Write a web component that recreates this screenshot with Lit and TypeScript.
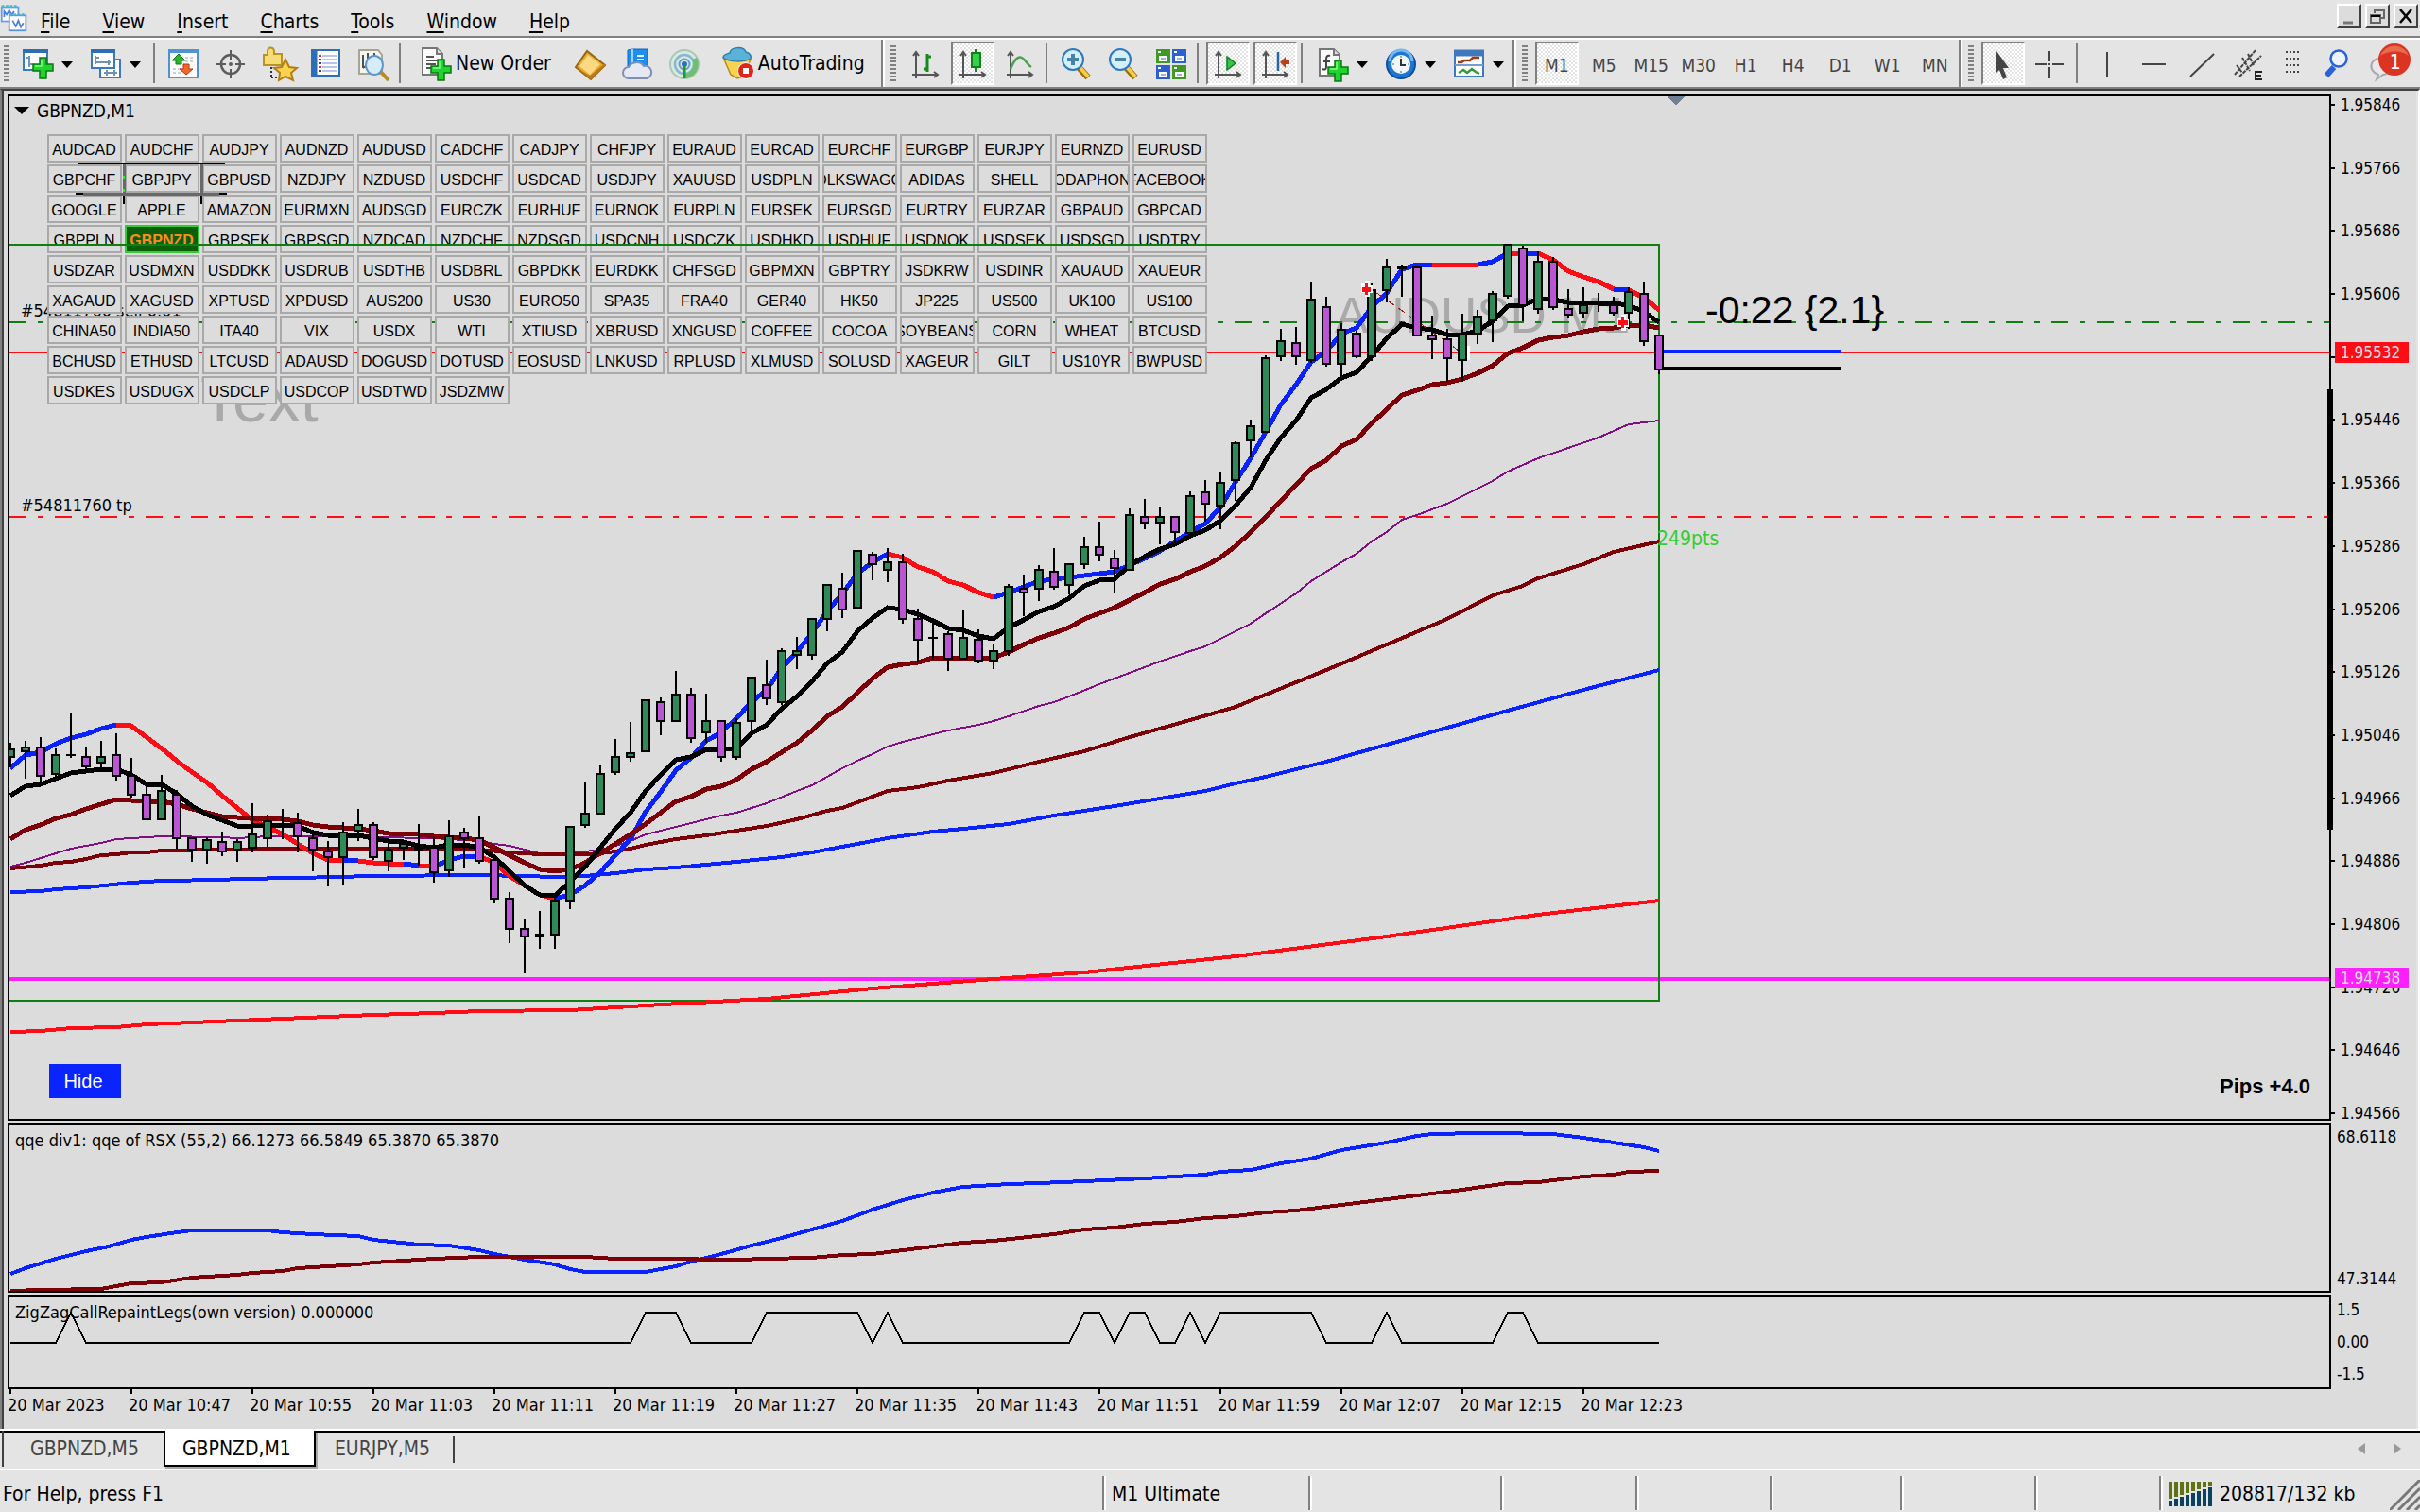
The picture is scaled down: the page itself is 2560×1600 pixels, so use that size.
import { LitElement, html, css, svg, nothing } from "lit";
import { customElement, property, state } from "lit/decorators.js";
import { classMap } from "lit/directives/class-map.js";

/* ---------- data ---------- */

const MENUS = ["File", "View", "Insert", "Charts", "Tools", "Window", "Help"];
const TIMEFRAMES = ["M1", "M5", "M15", "M30", "H1", "H4", "D1", "W1", "MN"];

const SYMBOLS = `
AUDCAD AUDCHF AUDJPY AUDNZD AUDUSD CADCHF CADJPY CHFJPY EURAUD EURCAD EURCHF EURGBP EURJPY EURNZD EURUSD
GBPCHF GBPJPY GBPUSD NZDJPY NZDUSD USDCHF USDCAD USDJPY XAUUSD USDPLN VOLKSWAGON ADIDAS SHELL VODAPHONE FACEBOOK
GOOGLE APPLE AMAZON EURMXN AUDSGD EURCZK EURHUF EURNOK EURPLN EURSEK EURSGD EURTRY EURZAR GBPAUD GBPCAD
GBPPLN GBPNZD GBPSEK GBPSGD NZDCAD NZDCHF NZDSGD USDCNH USDCZK USDHKD USDHUF USDNOK USDSEK USDSGD USDTRY
USDZAR USDMXN USDDKK USDRUB USDTHB USDBRL GBPDKK EURDKK CHFSGD GBPMXN GBPTRY JSDKRW USDINR XAUAUD XAUEUR
XAGAUD XAGUSD XPTUSD XPDUSD AUS200 US30 EURO50 SPA35 FRA40 GER40 HK50 JP225 US500 UK100 US100
CHINA50 INDIA50 ITA40 VIX USDX WTI XTIUSD XBRUSD XNGUSD COFFEE COCOA SOYBEANS CORN WHEAT BTCUSD
BCHUSD ETHUSD LTCUSD ADAUSD DOGUSD DOTUSD EOSUSD LNKUSD RPLUSD XLMUSD SOLUSD XAGEUR GILT US10YR BWPUSD
USDKES USDUGX USDCLP USDCOP USDTWD JSDZMW`.trim().split(/\s+/);

const PRICES = [
  "1.95846", "1.95766", "1.95686", "1.95606", "1.95526", "1.95446", "1.95366", "1.95286", "1.95206",
  "1.95126", "1.95046", "1.94966", "1.94886", "1.94806", "1.94726", "1.94646", "1.94566",
];
const TIMES = [
  "20 Mar 2023", "20 Mar 10:47", "20 Mar 10:55", "20 Mar 11:03", "20 Mar 11:11", "20 Mar 11:19", "20 Mar 11:27",
  "20 Mar 11:35", "20 Mar 11:43", "20 Mar 11:51", "20 Mar 11:59", "20 Mar 12:07", "20 Mar 12:15", "20 Mar 12:23",
];

/* One bar each: high, body top, body bottom, low, kind (u = up, d = down, x = doji). */
type Bar = [number, number, number, number, "u" | "d" | "x"];
const BARS: Bar[] = [
  [786, 792, 802, 812, "u"], [784, 790, 796, 824, "u"], [780, 790, 822, 828, "d"], [792, 798, 820, 824, "u"],
  [754, 798, 800, 802, "x"], [790, 800, 812, 815, "d"], [784, 800, 808, 813, "u"], [776, 798, 822, 826, "d"],
  [802, 820, 842, 844, "d"], [832, 840, 868, 868, "d"], [820, 836, 868, 868, "u"], [836, 840, 888, 898, "d"],
  [886, 886, 900, 912, "d"], [886, 888, 900, 914, "u"], [880, 890, 902, 906, "d"], [888, 890, 900, 912, "u"],
  [850, 882, 898, 902, "u"], [862, 868, 888, 896, "u"], [856, 871, 873, 888, "x"], [860, 870, 886, 902, "d"],
  [880, 886, 900, 922, "d"], [890, 900, 908, 938, "d"], [870, 880, 908, 936, "u"], [856, 872, 880, 890, "u"],
  [870, 872, 908, 910, "d"], [888, 898, 912, 922, "u"], [890, 892, 898, 910, "u"], [872, 896, 900, 916, "x"],
  [886, 896, 924, 934, "d"], [868, 884, 922, 928, "u"], [876, 880, 888, 918, "d"], [864, 886, 912, 914, "d"],
  [908, 909, 952, 956, "d"], [944, 950, 984, 998, "d"], [972, 982, 992, 1030, "d"], [964, 988, 992, 1004, "x"],
  [950, 952, 990, 1004, "u"], [874, 874, 954, 962, "u"], [828, 860, 874, 876, "u"], [810, 818, 862, 862, "u"],
  [782, 800, 818, 820, "u"], [764, 796, 802, 806, "u"], [740, 740, 796, 796, "u"], [738, 742, 764, 778, "d"],
  [710, 734, 764, 764, "u"], [728, 734, 782, 786, "d"], [734, 762, 776, 786, "u"], [762, 762, 802, 806, "d"],
  [760, 764, 802, 804, "u"], [716, 716, 764, 777, "u"], [698, 724, 740, 746, "d"], [686, 688, 744, 746, "u"],
  [674, 688, 694, 708, "u"], [654, 654, 694, 698, "u"], [618, 618, 656, 668, "u"], [606, 622, 646, 654, "d"],
  [582, 582, 644, 644, "u"], [584, 586, 598, 614, "d"], [580, 594, 604, 616, "u"], [586, 594, 656, 660, "d"],
  [644, 654, 678, 700, "d"], [658, 674, 676, 698, "x"], [668, 670, 698, 710, "d"], [646, 674, 698, 698, "u"],
  [666, 676, 700, 702, "d"], [682, 688, 700, 708, "u"], [618, 620, 690, 694, "u"], [608, 622, 628, 652, "d"],
  [598, 602, 624, 636, "u"], [580, 604, 622, 624, "d"], [596, 596, 620, 629, "u"], [568, 578, 598, 602, "u"],
  [552, 578, 588, 594, "d"], [582, 590, 602, 628, "d"], [538, 544, 604, 604, "u"], [528, 546, 554, 560, "d"],
  [536, 546, 554, 576, "u"], [546, 546, 564, 573, "d"], [520, 524, 565, 565, "u"], [508, 520, 534, 552, "d"],
  [500, 510, 536, 560, "u"], [467, 468, 509, 530, "u"], [444, 450, 467, 484, "u"], [376, 378, 458, 458, "u"],
  [348, 360, 378, 382, "u"], [346, 362, 378, 386, "d"], [298, 316, 382, 384, "u"], [314, 324, 386, 388, "d"],
  [342, 348, 386, 398, "u"], [350, 352, 378, 379, "d"], [300, 306, 378, 382, "u"], [274, 282, 308, 320, "u"],
  [280, 282, 285, 314, "x"], [282, 282, 356, 356, "d"], [334, 354, 360, 380, "d"], [348, 358, 380, 404, "d"],
  [332, 353, 382, 404, "u"], [328, 334, 354, 364, "u"], [308, 310, 340, 362, "u"], [258, 258, 314, 316, "u"],
  [260, 262, 324, 340, "d"], [266, 276, 328, 332, "u"], [272, 276, 326, 328, "d"], [306, 326, 334, 337, "d"],
  [304, 322, 332, 336, "u"], [310, 319, 321, 330, "x"], [314, 322, 332, 334, "d"], [304, 308, 332, 348, "u"],
  [298, 310, 362, 366, "d"], [354, 354, 392, 396, "d"],
];

/* Averages that hold one value for each bar. */
const BLACK_MA = [
  842, 832, 830, 824, 818, 816, 814, 814, 820, 830, 830, 840, 853, 862, 868, 874, 874, 873, 873, 874,
  881, 884, 884, 884, 887, 890, 891, 895, 897, 894, 894, 897, 907, 922, 937, 947, 948, 933, 917, 897,
  877, 860, 837, 820, 804, 801, 793, 793, 792, 776, 767, 750, 737, 721, 702, 690, 668, 654, 643, 645,
  650, 657, 665, 667, 673, 676, 664, 656, 647, 642, 633, 620, 614, 613, 598, 589, 581, 576, 567, 561,
  551, 535, 516, 487, 463, 445, 421, 412, 400, 394, 377, 358, 343, 347, 349, 354, 354, 350, 340, 324,
  323, 316, 317, 320, 320, 321, 321, 323, 330, 341,
];
const FAST_MA = [
  813, 799, 796, 787, 781, 777, 771, 767, 768, 780, 792, 805, 817, 828, 842, 855, 868, 875, 883, 893,
  903, 910, 910, 911, 913, 914, 914, 916, 917, 910, 906, 906, 913, 927, 937, 947, 951, 947, 937, 923,
  905, 888, 859, 838, 815, 802, 784, 775, 760, 743, 730, 707, 690, 670, 647, 628, 607, 595, 586, 590,
  600, 605, 615, 619, 627, 632, 627, 621, 615, 613, 611, 609, 607, 605, 598, 591, 583, 573, 563, 554,
  537, 510, 485, 457, 428, 407, 383, 372, 353, 347, 325, 310, 285, 280, 280, 280, 280, 280, 277, 268,
  268, 268, 275, 287, 293, 298, 306, 307, 315, 328,
];
/* Stretches of the fast average that are falling; the rest is rising. */
const FALLING: [number, number][] = [
  [7, 22], [23, 26], [27, 28], [31, 36], [58, 65], [94, 97], [99, 100], [101, 106], [107, 109],
];
const MAROON_MA = [
  888, 878, 873, 866, 862, 856, 851, 846, 847, 848, 848, 851, 856, 860, 864, 865, 866, 866, 867, 869,
  873, 875, 876, 877, 879, 882, 882, 883, 885, 886, 887, 889, 897, 905, 913, 920, 922, 920, 913, 903,
  893, 883, 872, 860, 848, 843, 835, 832, 825, 814, 806, 796, 786, 773, 758, 748, 733, 718, 706, 703,
  701, 696, 696, 696, 696, 696, 690, 682, 675, 670, 664, 655, 649, 643, 635, 627, 618, 613, 605, 599,
  590, 578, 563, 547, 530, 513, 496, 487, 472, 465, 448, 433, 418, 413, 407, 405, 401, 395, 387, 374,
  368, 360, 357, 355, 351, 348, 347, 344, 344, 347,
];

/* Slow lines: flat lists of bar, y. */
const PURPLE_MA = [
  0, 917, 1, 913, 2, 908, 3, 903, 4, 898, 5, 895, 6, 892, 7, 888, 8, 887, 10, 885, 14, 886, 15, 887, 17, 885,
  20, 885, 24, 886, 28, 887, 30, 889, 31, 890, 32, 893, 33, 895, 34, 899, 35, 903, 37, 903, 38, 901, 39, 899,
  40, 895, 41, 890, 42, 883, 43, 879, 44, 875, 46, 867, 47, 863, 48, 860, 50, 850, 52, 837, 53, 831, 54, 822,
  55, 813, 56, 805, 57, 798, 58, 790, 59, 785, 60, 781, 61, 777, 62, 773, 64, 767, 65, 763, 66, 758, 68, 747,
  69, 743, 70, 737, 72, 724, 74, 712, 76, 700, 78, 689, 79, 684, 80, 676, 81, 668, 82, 660, 83, 649, 85, 628,
  86, 615, 88, 595, 89, 586, 90, 573, 91, 563, 92, 550, 93, 545, 95, 533, 96, 525, 98, 509, 99, 499, 101, 485,
  103, 474, 105, 463, 107, 449, 108, 447, 109, 445,
];
const MAROON_SLOW = [
  0, 919, 2, 916, 3, 913, 4, 912, 5, 909, 6, 905, 7, 904, 8, 902, 9, 902, 10, 900, 14, 899, 18, 898, 30, 898,
  31, 899, 33, 902, 35, 904, 38, 904, 39, 903, 40, 901, 41, 898, 42, 894, 44, 888, 46, 884, 48, 879, 50, 874,
  52, 867, 54, 858, 55, 855, 57, 843, 58, 837, 60, 833, 62, 826, 65, 818, 68, 806, 71, 795, 74, 780, 78, 762,
  81, 748, 83, 735, 87, 709, 91, 682, 95, 655, 98, 630, 100, 620, 101, 612, 103, 602, 104, 597, 106, 584, 109, 573,
];
const BLUE_SLOW = [
  0, 944, 2, 943, 3, 941, 5, 939, 8, 934, 10, 932, 14, 931, 15, 930, 19, 929, 24, 927, 31, 926, 34, 927, 36, 928,
  38, 927, 40, 924, 42, 920, 44, 918, 46, 915, 48, 912, 51, 907, 53, 902, 55, 896, 58, 887, 61, 880, 63, 877,
  66, 872, 69, 863, 73, 853, 76, 845, 79, 837, 81, 829, 83, 822, 87, 806, 91, 788, 95, 770, 99, 752, 104, 730, 109, 709,
];
const RED_SLOW = [
  0, 1092, 2, 1091, 4, 1088, 7, 1087, 9, 1084, 12, 1082, 15, 1080, 18, 1078, 21, 1076, 24, 1074, 28, 1072,
  31, 1070, 37, 1069, 39, 1067, 42, 1064, 50, 1057, 57, 1046, 65, 1036, 71, 1029, 81, 1012, 91, 991, 101, 968, 109, 953,
];
const RSX_FAST = [
  0, 1348, 1, 1342, 3, 1332, 5, 1324, 6.5, 1319, 8, 1312, 9, 1309, 11, 1304, 12, 1302, 17, 1302, 18, 1304, 20, 1306,
  23, 1308, 24, 1312, 27, 1317, 29, 1318, 31, 1323, 32, 1327, 34, 1333, 36, 1338, 37, 1343, 38, 1346, 42, 1346,
  43, 1343, 44, 1340, 45, 1335, 47, 1327, 49, 1318, 51, 1310, 53, 1301, 55, 1292, 57, 1280, 59, 1270, 61, 1262,
  63, 1256, 66, 1253, 68, 1252, 71, 1250, 75, 1247, 79, 1243, 80, 1240, 82, 1238, 84, 1231, 86, 1226, 88, 1217,
  91, 1209, 93, 1202, 94, 1200, 97, 1199, 98, 1199, 102, 1200, 104, 1204, 106, 1209, 108, 1214, 109, 1218,
];
const RSX_SLOW = [
  0, 1366, 2, 1365, 6, 1364, 7, 1361, 8, 1358, 10, 1357, 12, 1352, 15, 1349, 16, 1347, 18, 1345, 19, 1342, 21, 1340,
  23, 1338, 24, 1336, 26, 1334, 28, 1332, 31, 1330, 38, 1330, 40, 1332, 45, 1332, 46, 1333, 48, 1333, 50, 1332,
  53, 1331, 55, 1328, 57, 1327, 60, 1321, 63, 1315, 65, 1313, 69, 1306, 71, 1301, 73, 1299, 75, 1295, 77, 1293,
  79, 1289, 81, 1287, 83, 1283, 85, 1281, 88, 1275, 92, 1267, 96, 1259, 99, 1252, 101, 1251, 104, 1245, 106, 1243,
  107, 1240, 109, 1239,
];
/* Bars on which the zigzag sits at its upper level. */
const ZIGZAG_HIGH: [number, number][] = [
  [4, 4], [42, 44], [50, 56], [58, 58], [71, 72], [74, 75], [78, 78], [80, 86], [91, 91], [99, 100],
];

const barX = (bar: number) => 11 + 16 * bar;
const fromBars = (ys: number[], start = 0, end = ys.length - 1) =>
  ys.slice(start, end + 1).map((y, i) => `${barX(start + i)},${y}`).join(" ");
const fromPairs = (flat: number[]) => {
  const out: string[] = [];
  for (let i = 0; i < flat.length; i += 2) out.push(`${barX(flat[i])},${flat[i + 1]}`);
  return out.join(" ");
};
const zigzagPoints = () =>
  BARS.map((_, i) => `${barX(i)},${ZIGZAG_HIGH.some(([a, b]) => i >= a && i <= b) ? 1389 : 1421}`).join(" ");

/* ---------- icons ---------- */

const plus = (x: number, y: number) => svg`
  <path d="M${x + 7} ${y}h7v7h7v7h-7v8h-7v-8h-7v-7h7z" fill="#1fd42c" stroke="#067a10" stroke-width="1.5"/>
  <path d="M${x + 9} ${y + 2}v7h-7" fill="none" stroke="#8df58e" stroke-width="1.5"/>`;
const axes = svg`<path d="M7 5v27M3 28h27M4 8l3-4 3 4M26 25l4 3-4 3" fill="none" stroke="#555" stroke-width="2"/>`;
const page = svg`<path d="M3 1h15l6 6v22H3z" fill="#fafafa" stroke="#777" stroke-width="2"/><path d="M18 1v6h6" fill="#ddd" stroke="#777" stroke-width="2"/>`;
const lens = (sign: string) => svg`
  <path d="M19 20l10 11" stroke="#9a6a10" stroke-width="7"/><path d="M20 20l9 10" stroke="#f2cf45" stroke-width="4"/>
  <ellipse cx="13" cy="12" rx="11" ry="11" fill="#d3effc" stroke="#2e78bb" stroke-width="2"/>
  <path d="${sign}" stroke="#4683a6" stroke-width="4"/>`;

const ICONS: Record<string, unknown> = {
  app: svg`
    <rect x="2" y="4" width="20" height="17" fill="#fff" stroke="#6b9be8" stroke-width="2"/>
    <path d="M2 3h20" stroke="#45b9c9" stroke-width="3" stroke-dasharray="3 2"/>
    <path d="M5 16V9l3 4 3-5 3 5 3-4" fill="none" stroke="#4a7fe0" stroke-width="2"/>
    <rect x="11" y="14" width="20" height="18" fill="#fff" stroke="#5b91ea" stroke-width="2"/>
    <path d="M11 13h20" stroke="#45b9c9" stroke-width="3" stroke-dasharray="3 2"/>
    <path d="M15 20l4 7 3-7 3 8 3-5" fill="none" stroke="#4a7fe0" stroke-width="2"/>`,
  newChart: svg`
    <rect x="2" y="2" width="25" height="21" fill="#fff" stroke="#3a7abf" stroke-width="2"/><path d="M1 3h27" stroke="#2f6db5" stroke-width="4"/>
    <path d="M8 8v12M5 10h3M8 17h4M14 19h6" stroke="#6e93b7" stroke-width="2"/>${plus(12, 10)}`,
  profiles: svg`
    <rect x="11" y="12" width="21" height="19" fill="#fff" stroke="#3a7abf" stroke-width="2"/><path d="M15 26h14M18 23v6M26 23v6" stroke="#6e93b7" stroke-width="2"/>
    <rect x="2" y="2" width="24" height="19" fill="#fff" stroke="#3a7abf" stroke-width="2"/><path d="M1 3h26" stroke="#2f6db5" stroke-width="4"/>
    <path d="M6 8v9M6 15h16M20 12v6M5 10h5" fill="none" stroke="#6e93b7" stroke-width="2"/>`,
  market: svg`
    <rect x="1" y="2" width="30" height="29" fill="#fdfdfd" stroke="#4f93d2" stroke-width="2"/><path d="M1 3h30" stroke="#4f93d2" stroke-width="4"/>
    <path d="M18 10h10M18 14h10M5 22h10M5 26h10" stroke="#cfcfcf" stroke-width="2" stroke-dasharray="3 2"/>
    <path d="M11 6l7 7h-4v4H8v-4H4z" fill="#2cb52c" stroke="#0c7a12"/><path d="M19 28l7-6h-4v-5h-6v5h-4z" fill="#f2662c" stroke="#b53410"/>`,
  target: svg`
    <circle cx="16" cy="17" r="10" fill="none" stroke="#5c5c5c" stroke-width="2.500"/><circle cx="16" cy="17" r="2" fill="#5c5c5c"/>
    <path d="M16 2v10M16 22v10M1 17h10M21 17h10" stroke="#5c5c5c" stroke-width="2"/>`,
  favorites: svg`
    <path d="M1 7h4V3a3 3 0 0 1 7 0v3h8v12H1z" fill="#f6dc77" stroke="#b99425" stroke-width="2"/>
    <path d="M9 20v12M9 31h6" fill="none" stroke="#333" stroke-width="2" stroke-dasharray="2 2"/>
    <path d="M24 12l4 8 8 1-6 5 2 8-8-4-7 4 1-8-6-5 8-1z" fill="#fbd34e" stroke="#b37d17" stroke-width="2"/>`,
  navigator: svg`
    <rect x="2" y="2" width="29" height="27" fill="#fff" stroke="#2d6fb3" stroke-width="2"/><path d="M5 2v27" stroke="#2d6fb3" stroke-width="5"/>
    <path d="M13 8h15M13 12h15M13 16h15M13 20h15M13 24h15" stroke="#b9c4ee" stroke-width="2"/><path d="M9 8h3M9 20h3" stroke="#e03030" stroke-width="2"/><path d="M9 12h3M9 16h3M9 24h3" stroke="#444" stroke-width="2"/>`,
  tester: svg`
    <path d="M2 2h20l4 5v20H2z" fill="#f4f4f0" stroke="#a8a492" stroke-width="2"/><path d="M6 7v14M11 5v6M18 5v5M6 21l6-4" stroke="#4f4f4f" stroke-width="2"/>
    <path d="M24 24l9 10" stroke="#c08a1a" stroke-width="4"/><ellipse cx="18" cy="18" rx="9" ry="10" fill="#d6ecfa" stroke="#5b97cc" stroke-width="2"/>`,
  newOrder: svg`${page}<path d="M7 10h8M7 14h12M7 18h10M7 22h5" stroke="#555" stroke-width="2"/>${plus(12, 13)}`,
  editor: svg`
    <path d="M1 20L13 3l19 15-15 15z" fill="#e6ac2e" stroke="#9a6312" stroke-width="2"/><path d="M5 19L14 7l13 10-11 11z" fill="#fbd982"/>
    <path d="M1 20l15 9 16-13v3L17 33z" fill="#b97b17"/>`,
  market2: svg`
    <path d="M6 2l5-1h16v18H6z" fill="#1d8df0" stroke="#0d66bf"/><path d="M11 1v18" stroke="#9fd4ff" stroke-width="2"/><path d="M16 8h7M16 12h7" stroke="#e8f6ff" stroke-width="2"/>
    <path d="M7 32a6 6 0 0 1 0-12 9 8 0 0 1 16-1 6 6 0 0 1 3 13z" fill="#e4e9f3" stroke="#7f90b4" stroke-width="2"/>`,
  signals: svg`
    <circle cx="16" cy="17" r="15" fill="#d5ebdb" stroke="#a8c8b4" stroke-width="2"/><circle cx="16" cy="17" r="10" fill="none" stroke="#8db4d4" stroke-width="2.500"/>
    <circle cx="16" cy="17" r="5.500" fill="none" stroke="#6b9bd0" stroke-width="2"/><path d="M16 32a15 15 0 0 0 13-22l-5 2a10 10 0 0 1-8 15z" fill="#6fbf73"/>
    <circle cx="16" cy="17" r="3" fill="#2f6fc0"/><path d="M16 18v14" stroke="#1e9a2c" stroke-width="3"/>`,
  auto: svg`
    <path d="M2 13h28l-8 18-6 2-7-4z" fill="#f8d34f" stroke="#bb8c1c" stroke-width="1.500"/><path d="M1 11c0-4 5-4 7-5 1-7 15-7 17-1 5 1 6 5 5 7-6 4-23 4-29-1z" fill="#59b2da" stroke="#2d7fa8" stroke-width="1.500"/>
    <circle cx="25" cy="25" r="8.500" fill="#e0261b" stroke="#fff"/><rect x="22" y="22" width="6" height="6" fill="#fff"/>`,
  bars: svg`${axes}<path d="M19 6v19M19 9h4M15 22h4" stroke="#168a1c" stroke-width="3"/>`,
  candles: svg`${axes}<path d="M20 1v24" stroke="#168a1c" stroke-width="2"/><rect x="16" y="5" width="9" height="15" fill="#34d24a" stroke="#12801b" stroke-width="2"/>`,
  line: svg`${axes}<path d="M7 22c4-10 8-14 12-12s5 7 10 10" fill="none" stroke="#4aa352" stroke-width="2.500"/>`,
  zoomIn: lens("M13 6v12M7 12h12"),
  zoomOut: lens("M7 12h12"),
  tile: svg`
    <rect x="1" y="1" width="15" height="15" fill="#3e9a22"/><rect x="18" y="1" width="15" height="15" fill="#2c5fd0"/><rect x="1" y="18" width="15" height="15" fill="#2c5fd0"/><rect x="18" y="18" width="15" height="15" fill="#3e9a22"/>
    <path d="M4 8h9v6H4zM21 8h9v6h-9zM4 25h9v6H4zM21 25h9v6h-9z" fill="#fff"/><path d="M6 11h5M23 11h5M6 28h5M23 28h5" stroke="#9bb6d8" stroke-width="2"/><path d="M3 4h3M20 4h3M3 21h3M20 21h3" stroke="#fff" stroke-width="2"/>`,
  scroll: svg`${axes}<path d="M16 9v14l9-7z" fill="#35c54a" stroke="#12801b" stroke-width="1.500"/>`,
  shift: svg`${axes}<path d="M20 4v20" stroke="#2766a8" stroke-width="2.500"/><path d="M22 15l6-6v4h4v4h-4v4z" fill="#b8401a"/>`,
  indicator: svg`${page}<path d="M14 8c-3-1-4 1-4 4v8c0 3-2 3-4 2M7 14h7" fill="none" stroke="#444" stroke-width="2"/>${plus(12, 13)}`,
  clock: svg`
    <circle cx="17" cy="17" r="15" fill="#1d77d0" stroke="#0d4f9c" stroke-width="2"/><path d="M5 14a12 12 0 0 1 24 0" fill="none" stroke="#73b9f3" stroke-width="3"/>
    <circle cx="17" cy="17" r="10" fill="#f1f6fa"/><path d="M17 11v7h5" fill="none" stroke="#333" stroke-width="2"/><path d="M17 8v2M17 24v2M8 17h2M24 17h2" stroke="#9ab" stroke-width="2"/>`,
  template: svg`
    <rect x="2" y="3" width="30" height="27" fill="#fff" stroke="#3f79bd" stroke-width="2"/><path d="M1 5h32" stroke="#3f79bd" stroke-width="7"/><path d="M2 18h30" stroke="#6ea0d4" stroke-width="2"/>
    <path d="M5 15h4l3-2h6l3-3h7" fill="none" stroke="#a23818" stroke-width="2.500"/><path d="M6 26l5-3 4 3 5-4 4 3 4 2" fill="none" stroke="#2f9a36" stroke-width="2.500"/>`,
  cursor: svg`<path d="M10 3l13 18h-6l4 10-4 2-4-10-4 4z" fill="#454545"/>`,
  cross: svg`<path d="M16 3v11M16 20v12M1 17h12M19 17h12" stroke="#454545" stroke-width="2"/><path d="M15 17h2" stroke="#454545" stroke-width="2"/>`,
  vline: svg`<path d="M17 4v26" stroke="#454545" stroke-width="2"/>`,
  hline: svg`<path d="M4 17h25" stroke="#454545" stroke-width="2"/>`,
  trend: svg`<path d="M5 30L30 6" stroke="#454545" stroke-width="2"/>`,
  channel: svg`
    <path d="M2 28L24 2M7 30L30 8M4 18l6 8M10 10l8 14M16 6l6 12" stroke="#454545" stroke-width="2" stroke-dasharray="4 1"/>
    <path d="M31 25h-7v8h7M24 29h6" fill="none" stroke="#222" stroke-width="2"/>`,
  dots: svg`<path d="M8 4h15M8 11h15M8 18h15M8 25h15" stroke="#454545" stroke-width="2" stroke-dasharray="2 2"/>`,
  search: svg`<path d="M5 29l8-9" stroke="#2a60d8" stroke-width="6"/><circle cx="18" cy="11" r="8.500" fill="#eef3fb" stroke="#2a60d8" stroke-width="2.500"/>`,
  bubble: svg`
    <path d="M10 33l2-5c-6-2-9-7-7-12 3-6 14-8 20-2 4 6 0 13-8 14z" fill="#e8e8ea" stroke="#a9a9ab" stroke-width="2"/>
    <circle cx="29" cy="12" r="17" fill="#dd3322"/><path d="M14 8a16 16 0 0 1 30 0c-6-6-22-6-30 0z" fill="#ea6a50"/>`,
};

@customElement("tb-icon")
class TbIcon extends LitElement {
  static styles = css`
    :host { display: inline-flex; flex: none; }
    svg { display: block; overflow: visible; }
  `;
  @property() name = "";
  @property({ type: Number }) size = 34;
  render() {
    return html`<svg width=${this.size} height=${this.size} viewBox="0 0 34 34" fill="none" aria-hidden="true">${ICONS[this.name]}</svg>`;
  }
}

/* ---------- toolbar ---------- */

@customElement("tool-bar")
class ToolBar extends LitElement {
  static styles = css`
    :host {
      display: flex;
      height: 50px;
      border-top: 2px solid #fff;
      border-bottom: 2px solid #808080;
      overflow: hidden;
    }
    .group {
      display: flex;
      align-items: center;
      gap: 4px;
      flex: none;
      padding: 0 2px 0 6px;
      border-left: 2px solid #fff;
      border-right: 2px solid #808080;
    }
    .group.first { border-left: 0; padding-left: 4px; }
    .group.last { border-right: 0; }
    .grip {
      width: 6px;
      height: 38px;
      margin-right: 4px;
      background: repeating-linear-gradient(#808080 0 2px, transparent 2px 4px);
    }
    .sep { width: 4px; height: 42px; border-left: 2px solid #808080; }
    button {
      display: flex;
      align-items: center;
      justify-content: center;
      box-sizing: border-box;
      height: 46px;
      width: 46px;
      flex: none;
      padding: 2px 0 0;
      border: 2px solid transparent;
      background: none;
      font: inherit;
      color: #000;
      white-space: nowrap;
    }
    button.pressed {
      border-color: #808080 #fff #fff #808080;
      background: repeating-conic-gradient(#fff 0 25%, #e4e4e4 0 50%) 0 0 / 4px 4px;
    }
    button.drop { width: 68px; gap: 8px; }
    button.drop::after {
      content: "";
      border: 6px solid transparent;
      border-top: 7px solid #000;
      border-bottom: 0;
    }
    button.first-drop { justify-content: flex-start; padding-left: 3px; }
    button.text { width: auto; gap: 4px; padding: 0 13px 0 10px; }
    button.frame { padding-top: 4px; font-size: 19px; color: #444; }
    button.narrow { width: 42px; }
    .alerts { position: relative; }
    .count { position: absolute; left: 28px; top: 6px; color: #fff; line-height: 28px; }
  `;
  @state() private timeframe = "M1";

  private tool(name: string, label: string, extra = "") {
    return html`<button class=${extra} aria-label=${label}><tb-icon name=${name}></tb-icon></button>`;
  }

  render() {
    return html`
      <div class="group first">
        <span class="grip"></span>
        ${this.tool("newChart", "New chart", "drop first-drop")} ${this.tool("profiles", "Profiles", "drop first-drop")}
        <span class="sep"></span>
        ${this.tool("market", "Market watch")} ${this.tool("target", "Data window")}
        ${this.tool("favorites", "Navigator")} ${this.tool("navigator", "Terminal")} ${this.tool("tester", "Strategy tester")}
        <span class="sep"></span>
        <button class="text"><tb-icon name="newOrder"></tb-icon>New Order</button>
        ${this.tool("editor", "Editor")} ${this.tool("market2", "Market")} ${this.tool("signals", "Signals")}
        <button class="text"><tb-icon name="auto"></tb-icon>AutoTrading</button>
      </div>
      <div class="group">
        <span class="grip"></span>
        ${this.tool("bars", "Bar chart")} ${this.tool("candles", "Candlesticks", "pressed")} ${this.tool("line", "Line chart")}
        <span class="sep"></span>
        ${this.tool("zoomIn", "Zoom in")} ${this.tool("zoomOut", "Zoom out")} ${this.tool("tile", "Tile windows")}
        <span class="sep"></span>
        ${this.tool("scroll", "Auto scroll", "pressed")} ${this.tool("shift", "Chart shift", "pressed")}
        <span class="sep"></span>
        ${this.tool("indicator", "Indicators", "drop")} ${this.tool("clock", "Periods", "drop")} ${this.tool("template", "Templates", "drop")}
      </div>
      <div class="group">
        <span class="grip"></span>
        ${TIMEFRAMES.map((t) => html`
          <button class=${classMap({ frame: true, pressed: t === this.timeframe })} @click=${() => (this.timeframe = t)}>${t}</button>`)}
      </div>
      <div class="group last">
        <span class="grip"></span>
        ${this.tool("cursor", "Cursor", "pressed")} ${this.tool("cross", "Crosshair")}
        <span class="sep"></span>
        ${this.tool("vline", "Vertical line")} ${this.tool("hline", "Horizontal line")} ${this.tool("trend", "Trendline")}
        ${this.tool("channel", "Channel")} ${this.tool("dots", "Fibonacci", "narrow")} ${this.tool("search", "Search", "narrow")}
        <button class="alerts" aria-label="Alerts"><tb-icon name="bubble"></tb-icon><span class="count">1</span></button>
      </div>
    `;
  }
}

/* ---------- price chart ---------- */

@customElement("price-chart")
class PriceChart extends LitElement {
  static styles = css`
    :host { display: block; position: relative; overflow: hidden; line-height: 20px; }
    svg { position: absolute; inset: 0; width: 100%; height: 100%; pointer-events: none; shape-rendering: crispEdges; }
    .label { position: absolute; white-space: nowrap; }
    .mark { color: #a9a9a9; font-family: "Liberation Sans", Arial, sans-serif; line-height: 60px; }
    .mark-symbol { left: 1402px; top: 202px; font-size: 53px; }
    .mark-text { left: 202px; top: 290px; font-size: 68px; }
    .title { left: 5px; top: 5px; display: flex; align-items: center; gap: 8px; font-size: 19px; }
    .title::before { content: ""; border: 8px solid transparent; border-top-color: #000; border-bottom: 0; }
    .stop { left: 12px; top: 217px; }
    .take { left: 12px; top: 423px; }
    .points { left: 1743px; top: 458px; color: #32cd32; font-size: 21px; }
    .timer { left: 1794px; top: 206px; font: 41px/40px "Liberation Sans", Arial, sans-serif; }
    .pips { right: 20px; bottom: 24px; font: bold 22px/20px "Liberation Sans", Arial, sans-serif; }
    .symbols {
      position: absolute;
      left: 40px;
      top: 40px;
      display: grid;
      grid-template-columns: repeat(15, 79px);
      grid-auto-rows: 30px;
      gap: 2px 3px;
    }
    button { padding: 0; color: #000; font: 16px/20px "Liberation Sans", Arial, sans-serif; white-space: nowrap; }
    .symbol {
      display: flex;
      align-items: center;
      justify-content: center;
      overflow: hidden;
      padding-top: 3px;
      padding-right: 1px;
      border: 2px solid #a9a9a9;
      background: #dcdcdc;
    }
    .symbol.active { border-color: #32cd32; background: #0b5f0b; color: #ff8c1a; font-weight: bold; }
    .hide {
      position: absolute;
      left: 42px;
      bottom: 22px;
      width: 76px;
      height: 36px;
      padding: 0 4px 0 0;
      border: 0;
      background: #0a24ff;
      color: #fff;
      font-size: 20px;
    }
  `;
  @state() private active = "GBPNZD";
  @state() private open = true;

  private candle([high, top, bottom, low, kind]: Bar, i: number) {
    const x = barX(i);
    const fill = kind === "u" ? "#2e8b57" : kind === "d" ? "#ba55d3" : "#000";
    return svg`
      <path d="M${x} ${high}V${low}" stroke="#000" stroke-width="2"/>
      ${kind === "x"
        ? svg`<rect x=${x - 5} y=${top} width="10" height=${bottom - top} fill="#000"/>`
        : svg`<rect x=${x - 4} y=${top + 1} width="8" height=${bottom - top - 2} fill=${fill} stroke="#000" stroke-width="2"/>`}`;
  }

  private curve(points: string, color: string, width = 4) {
    return svg`<polyline points=${points} fill="none" stroke=${color} stroke-width=${width}/>`;
  }

  render() {
    return html`
      <span class="label mark mark-symbol">AUDUSD M1</span>
      <span class="label mark mark-text">Text</span>
      <svg aria-hidden="true"><g transform="translate(-10 -102)">
        <path d="M10 341H9000" stroke="#0f7f12" stroke-width="2" stroke-dasharray="18 12 6 12"/>
        <path d="M10 547H9000" stroke="#ff0d16" stroke-width="2" stroke-dasharray="18 12 6 12"/>
        <path d="M10 373H9000" stroke="#ff0d16" stroke-width="2"/>
        <path d="M10 1036H9000" stroke="#ff20ff" stroke-width="4"/>
        <path d="M10 259H1755V1059H10" fill="none" stroke="#0f7f12" stroke-width="2"/>
        ${this.curve(fromPairs(RED_SLOW), "#ff0d16")}
        ${this.curve(fromPairs(BLUE_SLOW), "#0a22ff")}
        ${this.curve(fromPairs(PURPLE_MA), "#800f80", 2)}
        ${this.curve(fromPairs(MAROON_SLOW), "#7d0008")}
        ${this.curve(fromBars(FAST_MA), "#0a22ff", 5)}
        ${FALLING.map(([a, b]) => this.curve(fromBars(FAST_MA, a, b), "#ff0d16", 5))}
        ${this.curve(fromBars(MAROON_MA), "#7d0008", 5)}
        ${this.curve(fromBars(BLACK_MA), "#000", 5)}
        <path d="M1445 302L1553 378" stroke="#9c1c1c" stroke-width="1" stroke-dasharray="8 6"/>
        ${BARS.map((bar, i) => this.candle(bar, i))}
        <path d="M1440 300h4v-3h5v5h3v8h-3v4h-5v-4h-4zM1711 336h4v-3h5v5h3v8h-3v4h-5v-4h-4z" fill="#fff"/>
        <path d="M1441 304h3v-4h3v4h3v5h-3v3h-3v-3h-3zM1712 339h3v-4h3v4h4v5h-4v3h-3v-3h-3z" fill="#ff0d16"/>
        <path d="M1553 366v15" stroke="#fff" stroke-width="3"/>
        <path d="M1760 372H1948" stroke="#0a22ff" stroke-width="4"/>
        <path d="M1760 390H1948" stroke="#000" stroke-width="4"/>
        <path d="M1764 102h18l-9 10z" fill="#708090"/>
      </g></svg>
      <span class="label title">GBPNZD,M1</span>
      <span class="label stop">#54811760 sell 0.01</span>
      <span class="label take">#54811760 tp</span>
      <span class="label points">249pts</span>
      <span class="label timer">-0:22 {2.1}</span>
      ${this.open
        ? html`<div class="symbols">
            ${SYMBOLS.map((s) => html`
              <button class=${classMap({ symbol: true, active: s === this.active })} @click=${() => (this.active = s)}>${s}</button>`)}
          </div>`
        : nothing}
      <svg aria-hidden="true"><g transform="translate(-10 -102)">
        <path d="M10 259H1300" stroke="#0f7f12" stroke-width="2"/>
        <path d="M82 173H238M80 205H240M131 206V216M213 206V216" stroke="#000" stroke-width="2"/>
        <path d="M131 174V206M213 174V206M88 205H232" stroke="#696969" stroke-width="3"/>
        <path d="M131 186v3M131 200v3" stroke="#20f030" stroke-width="2"/>
      </g></svg>
      <button class="hide" @click=${() => (this.open = !this.open)}>Hide</button>
      <span class="label pips">Pips +4.0</span>
    `;
  }
}

/* ---------- application ---------- */

@customElement("app-root")
class AppRoot extends LitElement {
  static styles = css`
    :host {
      display: flex;
      flex-direction: column;
      min-height: 100vh;
      background: #e4e4e4;
      color: #000;
      font: 21px/24px "DejaVu Sans Condensed", "DejaVu Sans", sans-serif;
    }
    .menubar { display: flex; align-items: center; height: 38px; border-bottom: 2px solid #808080; }
    .menubar tb-icon { margin-right: 13px; }
    .menus { display: flex; gap: 34px; flex: 1; padding-top: 8px; }
    .menus a { color: #000; text-decoration: none; }
    .menus u { text-decoration-thickness: 2px; text-underline-offset: 3px; }
    .window-buttons { display: flex; gap: 4px; padding: 0 2px 4px 0; }
    .window-buttons button {
      display: flex;
      width: 26px;
      height: 26px;
      padding: 2px;
      border: 2px solid;
      border-color: #fff #404040 #404040 #fff;
      background: #dcdcdc;
    }
    .window-buttons svg { display: block; }

    .chart {
      flex: 1;
      display: flex;
      flex-direction: column;
      padding: 4px 2px 0 6px;
      border-left: 2px solid #808080;
      border-top: 2px solid #404040;
      border-right: 2px solid #fff;
      background: #dcdcdc;
      box-shadow: inset 2px 0 #404040, inset -2px 0 #e4e4e4;
      font-size: 18px;
    }
    .row { display: flex; margin-bottom: 2px; }
    .row.main { flex: 1; }
    .row.rsx { height: 180px; }
    .row.zigzag { height: 100px; margin-bottom: 0; }
    .pane { position: relative; flex: 1; box-sizing: border-box; border: 2px solid #000; overflow: hidden; }
    .pane svg { position: absolute; inset: 0; width: 100%; height: 100%; shape-rendering: crispEdges; }
    .pane .name { position: relative; display: block; padding: 5px 6px; }
    .axis {
      position: relative;
      display: flex;
      flex-direction: column;
      justify-content: space-between;
      box-sizing: border-box;
      width: 90px;
      font-size: 17px;
      line-height: 16px;
    }
    .row.main .axis { padding-top: 3px; }
    .tick { display: flex; align-items: center; gap: 6px; }
    .tick::before { content: ""; width: 4px; height: 2px; background: #000; }
    .row.rsx .axis { padding: 7px 0 7px 6px; }
    .row.zigzag .axis { padding: 8px 0 8px 6px; }
    .badge { position: absolute; left: 4px; width: 72px; padding-left: 6px; line-height: 22px; color: #dcdcdc; }
    .bid { top: 262px; background: #ff0d16; }
    .level { top: 924px; background: #ff20ff; }
    .range { position: absolute; left: -4px; top: 312px; width: 6px; height: 466px; background: #000; }
    .times { display: flex; height: 42px; overflow: hidden; }
    .times span { flex: none; width: 128px; line-height: 24px; white-space: nowrap; }
    .times span::before { content: ""; display: block; width: 2px; height: 5px; margin-left: 2px; background: #000; }

    .tabs {
      display: flex;
      height: 40px;
      padding-left: 2px;
      border-top: 2px solid #fff;
      border-bottom: 2px solid #fff;
      background: linear-gradient(#000 2px, transparent 2px);
    }
    .tab {
      box-sizing: border-box;
      height: 38px;
      padding: 0 24px 0 20px;
      border: 0;
      background: none;
      color: #444;
      font: inherit;
    }
    .tab.first { padding: 0 26px 0 28px; border-left: 2px solid #404040; }
    .tab.current {
      padding: 2px 24px 0 18px;
      border: 2px solid #000;
      border-top: 0;
      background: #fff;
      color: #000;
      box-shadow: 2px 2px #a8a8a8;
    }
    .rule { width: 2px; height: 28px; margin-top: 6px; background: #404040; }
    .scroll { display: flex; align-items: center; gap: 8px; margin-left: auto; padding-right: 9px; }
    .scroll button { width: 30px; height: 30px; padding: 0; border: 0; background: none; }

    .status {
      display: grid;
      grid-template-columns: 1fr 218px 203px 143px 142px 138px 142px 132px 276px;
      align-items: end;
      box-sizing: border-box;
      height: 44px;
      padding-bottom: 2px;
    }
    .cell {
      display: flex;
      align-items: center;
      gap: 8px;
      box-sizing: border-box;
      height: 36px;
      padding: 2px 0 0 8px;
      border-left: 2px solid #808080;
      box-shadow: inset 2px 0 #fff;
      white-space: nowrap;
    }
    .cell.help { padding-left: 3px; border: 0; box-shadow: none; }
    .corner { margin-left: auto; align-self: flex-end; }
  `;
  @state() private tab = "GBPNZD,M1";

  render() {
    return html`
      <nav class="menubar">
        <tb-icon name="app" size="30"></tb-icon>
        <div class="menus">${MENUS.map((m) => html`<a href="#${m}"><u>${m[0]}</u>${m.slice(1)}</a>`)}</div>
        <div class="window-buttons">
          <button aria-label="Minimize"><svg width="18" height="18"><path d="M3 16h10" stroke="#777" stroke-width="3"/></svg></button>
          <button aria-label="Restore"><svg width="18" height="18" fill="none" stroke="#666" stroke-width="2"><path d="M6 6V2h10v9h-4M6 3h10M2 8h10v8H2z"/><path d="M2 9h10" stroke="#000"/></svg></button>
          <button aria-label="Close"><svg width="18" height="18"><path d="M3 2l12 14M15 2L3 16" stroke="#000" stroke-width="2.500"/></svg></button>
        </div>
      </nav>
      <tool-bar></tool-bar>

      <main class="chart">
        <div class="row main">
          <price-chart class="pane"></price-chart>
          <div class="axis">
            ${PRICES.map((p) => html`<span class="tick">${p}</span>`)}
            <span class="badge bid">1.95532</span>
            <span class="badge level">1.94738</span>
            <span class="range"></span>
          </div>
        </div>
        <div class="row rsx">
          <div class="pane">
            <svg aria-hidden="true"><g transform="translate(-10 -1190)" fill="none" stroke-width="4">
              <polyline points=${fromPairs(RSX_FAST)} stroke="#0a22ff"/>
              <polyline points=${fromPairs(RSX_SLOW)} stroke="#7d0008"/>
            </g></svg>
            <span class="name">qqe div1: qqe of RSX (55,2) 66.1273 66.5849 65.3870 65.3870</span>
          </div>
          <div class="axis"><span>68.6118</span><span>47.3144</span></div>
        </div>
        <div class="row zigzag">
          <div class="pane">
            <svg aria-hidden="true"><g transform="translate(-10 -1372)"><polyline points=${zigzagPoints()} fill="none" stroke="#000" stroke-width="2"/></g></svg>
            <span class="name">ZigZagCallRepaintLegs(own version) 0.000000</span>
          </div>
          <div class="axis"><span>1.5</span><span>0.00</span><span>-1.5</span></div>
        </div>
        <div class="times">${TIMES.map((t) => html`<span>${t}</span>`)}</div>
      </main>

      <div class="tabs">
        ${["GBPNZD,M5", "GBPNZD,M1", "EURJPY,M5"].map((t, i) => html`
          <button class=${classMap({ tab: true, first: i === 0, current: t === this.tab })} @click=${() => (this.tab = t)}>${t}</button>`)}
        <span class="rule"></span>
        <div class="scroll">
          <button aria-label="Previous tab"><svg width="8" height="12"><path d="M8 0v12L0 6z" fill="#999"/></svg></button>
          <button aria-label="Next tab"><svg width="8" height="12"><path d="M0 0v12l8-6z" fill="#999"/></svg></button>
        </div>
      </div>

      <footer class="status">
        <div class="cell help">For Help, press F1</div>
        <div class="cell">M1 Ultimate</div>
        <div class="cell"></div><div class="cell"></div><div class="cell"></div>
        <div class="cell"></div><div class="cell"></div><div class="cell"></div>
        <div class="cell">
          <svg width="46" height="26" aria-hidden="true">
            ${[18, 16, 14, 12, 10, 8, 6, 4].map((h, i) => svg`
              <rect x=${i * 6} y="0" width="4" height=${h} fill="#5c7414"/>
              <rect x=${i * 6} y=${h + 2} width="4" height=${24 - h} fill="#0b4260"/>`)}
          </svg>
          208817/132 kb
          <svg class="corner" width="32" height="32" aria-hidden="true"><path d="M0 32L32 0M9 32L32 9M18 32L32 18M27 32l5-5" stroke="#777" stroke-width="3"/></svg>
        </div>
      </footer>
    `;
  }
}
